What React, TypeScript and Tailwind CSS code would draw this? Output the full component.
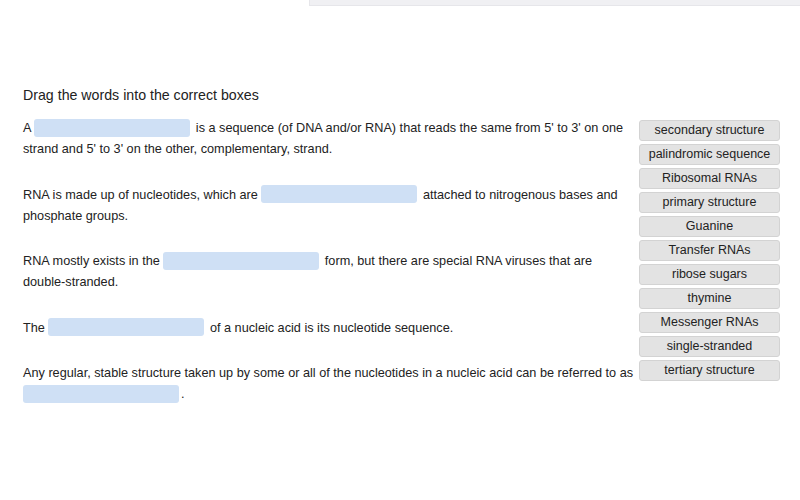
const words = [
  'secondary structure',
  'palindromic sequence',
  'Ribosomal RNAs',
  'primary structure',
  'Guanine',
  'Transfer RNAs',
  'ribose sugars',
  'thymine',
  'Messenger RNAs',
  'single-stranded',
  'tertiary structure',
]

function Blank() {
  return <span className="inline-block align-middle w-[156px] h-[18px] mr-[2px] -mt-[2px] rounded-[3px] bg-[#cfe0f5]" />
}

export default function App() {
  return (
    <div className="w-[800px] h-[500px] bg-white text-[#222] font-['Liberation_Sans',Arial,sans-serif] overflow-hidden">
      <div className="flex justify-end">
        <div className="w-[491px] h-[6px] bg-[#f0f0f3] border-l border-b border-[#e6e6ea]" />
      </div>

      <div className="pl-[23px] pt-[79px]">
        <h2 className="text-[14.2px] leading-[20px]">Drag the words into the correct boxes</h2>

        <div className="flex mt-[12px]">
          <div className="w-[613px] pt-[1px] text-[12.7px] leading-[21.3px]">
            <p className="mb-[24px]">
              A <Blank /> is a sequence (of DNA and/or RNA) that reads the same from 5' to 3' on one strand and 5' to 3' on the other, complementary, strand.
            </p>
            <p className="mb-[24px]">
              RNA is made up of nucleotides, which are <Blank /> attached to nitrogenous bases and phosphate groups.
            </p>
            <p className="mb-[24px]">
              RNA mostly exists in the <Blank /> form, but there are special RNA viruses that are{' '}
              <span className="whitespace-nowrap">double-stranded.</span>
            </p>
            <p className="mb-[24px]">
              The <Blank /> of a nucleic acid is its nucleotide sequence.
            </p>
            <p>
              Any regular, stable structure taken up by some or all of the nucleotides in a nucleic acid can be referred to as <Blank />.
            </p>
          </div>

          <div className="ml-[3px] mt-[3px] flex flex-col gap-[3px]">
            {words.map((w) => (
              <div
                key={w}
                className="w-[141px] h-[21px] flex items-center justify-center rounded-[3px] bg-[#e3e3e3] border border-[#d3d3d3] text-[12.5px] text-[#222]"
              >
                {w}
              </div>
            ))}
          </div>
        </div>
      </div>
    </div>
  )
}
